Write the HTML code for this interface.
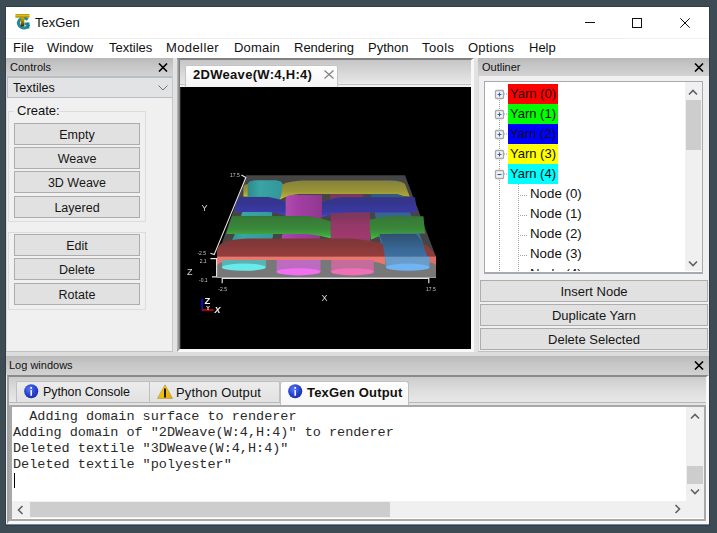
<!DOCTYPE html>
<html><head><meta charset="utf-8">
<style>
html,body{margin:0;padding:0;}
body{width:717px;height:533px;position:relative;overflow:hidden;background:#3d4b54;font-family:"Liberation Sans",sans-serif;font-size:13px;color:#111;}
.a{position:absolute;}
.t{position:absolute;white-space:nowrap;line-height:13px;}
.btn{position:absolute;box-sizing:border-box;background:#e1e1e1;border:1px solid #adadad;text-align:center;font-size:13px;line-height:21px;color:#161616;}
.dtitle{position:absolute;height:18px;background:linear-gradient(#b9b9b9,#c6c6c6 40%,#d2d2d2);}
.mono{font-family:"Liberation Mono",monospace;font-size:13.5px;line-height:16px;white-space:pre;color:#2a2a2a;}
</style></head>
<body>
<!-- window -->
<div class="a" style="left:5px;top:6px;width:705px;height:520px;background:#323e46;"></div>
<div class="a" style="left:6px;top:7px;width:703px;height:518px;background:#7584a0;"></div>
<div class="a" style="left:6px;top:7px;width:703px;height:517px;background:#f0f0f0;"></div>
<!-- title bar -->
<div class="a" style="left:6px;top:7px;width:703px;height:31px;background:#fff;"></div>
<div class="a" style="left:6px;top:38px;width:616px;height:1px;background:#ececec;"></div>
<div class="a" style="left:6px;top:39px;width:703px;height:19px;background:#fff;"></div>
<!-- app icon -->
<svg class="a" style="left:13px;top:12px" width="20" height="20" viewBox="0 0 20 20">
  <defs>
   <linearGradient id="tst" x1="0" y1="0" x2="0" y2="1"><stop offset="0" stop-color="#d8b000"/><stop offset="0.6" stop-color="#8a6a00"/><stop offset="1" stop-color="#2a2000"/></linearGradient>
   <linearGradient id="tbar" x1="0" y1="0" x2="0" y2="1"><stop offset="0" stop-color="#a08000"/><stop offset="0.4" stop-color="#e0c000"/><stop offset="1" stop-color="#9a7c00"/></linearGradient>
  </defs>
  <path d="M14.6 7.6A5.3 5 0 1 0 15.8 12.5" fill="none" stroke="#1e8c9c" stroke-width="3"/>
  <rect x="11.5" y="10.6" width="4.8" height="2.6" fill="#1e8c9c"/>
  <rect x="13.6" y="10.6" width="2.7" height="6" fill="#1a7f8e"/>
  <rect x="2.4" y="2.1" width="14.1" height="3.5" fill="url(#tbar)"/>
  <rect x="7.7" y="5.4" width="3.6" height="9" fill="url(#tst)"/>
</svg>
<div class="t" style="left:35px;top:16px;font-size:13px;">TexGen</div>
<!-- window controls -->
<div class="a" style="left:585px;top:22px;width:10px;height:1px;background:#111;"></div>
<div class="a" style="left:632px;top:18px;width:8px;height:8px;border:1px solid #111;"></div>
<svg class="a" style="left:680px;top:18px" width="10" height="10" viewBox="0 0 10 10"><path d="M0.3 0.3L9.7 9.7M9.7 0.3L0.3 9.7" stroke="#111" stroke-width="1"/></svg>
<!-- menu -->
<div class="t" style="left:13px;top:41px;">File</div>
<div class="t" style="left:47px;top:41px;">Window</div>
<div class="t" style="left:109px;top:41px;">Textiles</div>
<div class="t" style="left:166px;top:41px;letter-spacing:0.4px;">Modeller</div>
<div class="t" style="left:234px;top:41px;letter-spacing:0.2px;">Domain</div>
<div class="t" style="left:294px;top:41px;">Rendering</div>
<div class="t" style="left:368px;top:41px;">Python</div>
<div class="t" style="left:422px;top:41px;letter-spacing:0.4px;">Tools</div>
<div class="t" style="left:468px;top:41px;letter-spacing:0.2px;">Options</div>
<div class="t" style="left:529px;top:41px;">Help</div>

<!-- Controls dock -->
<div class="dtitle" style="left:6px;top:58px;width:167px;"></div>
<div class="t" style="left:10px;top:61px;font-size:11px;">Controls</div>
<svg class="a" style="left:158px;top:63px" width="10" height="9" viewBox="0 0 10 9"><path d="M1 0.5L9 8.5M9 0.5L1 8.5" stroke="#000" stroke-width="1.6"/></svg>
<div class="a" style="left:7px;top:76px;width:166px;height:22px;box-sizing:border-box;background:#e2e3e5;border:1px solid #b9bec4;border-width:2px 1px 1px 1px;"></div>
<div class="t" style="left:13px;top:82px;font-size:12.5px;">Textiles</div>
<svg class="a" style="left:158px;top:85px" width="10" height="6" viewBox="0 0 10 6"><path d="M0.5 0.5L5 5L9.5 0.5" stroke="#707070" fill="none" stroke-width="1"/></svg>

<!-- group box 1 -->
<div class="a" style="left:8px;top:111px;width:138px;height:111px;box-sizing:border-box;border:1px solid #dcdcdc;"></div>
<div class="a" style="left:14px;top:104px;width:45px;height:12px;background:#f0f0f0;"></div>
<div class="t" style="left:17px;top:104px;">Create:</div>
<div class="btn" style="left:14px;top:123px;width:126px;height:22px;font-size:12.5px;padding-top:1px;">Empty</div>
<div class="btn" style="left:14px;top:147px;width:126px;height:22px;font-size:12.5px;padding-top:1px;">Weave</div>
<div class="btn" style="left:14px;top:171px;width:126px;height:22px;font-size:12.5px;padding-top:1px;">3D Weave</div>
<div class="btn" style="left:14px;top:196px;width:126px;height:22px;font-size:12.5px;padding-top:1px;">Layered</div>
<!-- group box 2 -->
<div class="a" style="left:8px;top:232px;width:138px;height:78px;box-sizing:border-box;border:1px solid #dcdcdc;"></div>
<div class="btn" style="left:14px;top:234px;width:126px;height:22px;font-size:12.5px;padding-top:1px;">Edit</div>
<div class="btn" style="left:14px;top:258px;width:126px;height:22px;font-size:12.5px;padding-top:1px;">Delete</div>
<div class="btn" style="left:14px;top:283px;width:126px;height:22px;font-size:12.5px;padding-top:1px;">Rotate</div>
<!-- panel borders -->
<div class="a" style="left:6px;top:76px;width:1px;height:275px;background:#dadada;"></div>
<div class="a" style="left:172px;top:76px;width:1px;height:275px;background:#c8c8c8;"></div>
<div class="a" style="left:6px;top:351px;width:167px;height:1px;background:#c0c0c0;"></div>

<!-- separators -->
<div class="a" style="left:173px;top:58px;width:4px;height:294px;background:#e2e2e2;"></div>
<div class="a" style="left:474px;top:58px;width:4px;height:294px;background:#e2e2e2;"></div>

<!-- center tab widget -->
<div class="a" style="left:177px;top:58px;width:297px;height:294px;box-sizing:border-box;border-style:solid;border-color:#808080 #f8f8f8 #f8f8f8 #a4a4a4;border-width:2px 3px 3px 3px;background:linear-gradient(#c6c6c6,#e6e6e6 23px,#f0f0f0 24px);"></div>
<div class="a" style="left:180px;top:84px;width:291px;height:1px;background:#c0c0c0;"></div>
<div class="a" style="left:185px;top:65px;width:153px;height:22px;box-sizing:border-box;border:1px solid #c4c4c4;border-bottom:none;border-radius:2px 2px 0 0;background:linear-gradient(#ffffff,#f4f4f4);"></div>
<div class="t" style="left:193px;top:68px;font-weight:bold;font-size:13px;letter-spacing:0.3px;">2DWeave(W:4,H:4)</div>
<svg class="a" style="left:324px;top:70px" width="10" height="9" viewBox="0 0 10 9"><path d="M0.5 0.5L9.5 8.5M9.5 0.5L0.5 8.5" stroke="#808080" stroke-width="1.2"/></svg>
<!-- 3D viewport -->
<svg class="a" style="left:180px;top:87px" width="291" height="262" viewBox="180 87 291 262">
<defs>
 <linearGradient id="gy" x1="0" y1="0" x2="0" y2="1"><stop offset="0" stop-color="#85813a"/><stop offset="0.55" stop-color="#9a9438"/><stop offset="0.85" stop-color="#b4ac3a"/><stop offset="1" stop-color="#d4cc46"/></linearGradient>
 <linearGradient id="gb" x1="0" y1="0" x2="0" y2="1"><stop offset="0" stop-color="#343486"/><stop offset="0.7" stop-color="#3838a0"/><stop offset="0.88" stop-color="#3c3cbc"/><stop offset="1" stop-color="#5050ea"/></linearGradient>
 <linearGradient id="gg" x1="0" y1="0" x2="0" y2="1"><stop offset="0" stop-color="#367636"/><stop offset="0.6" stop-color="#3a8a3a"/><stop offset="0.85" stop-color="#3ea83e"/><stop offset="1" stop-color="#4cd04c"/></linearGradient>
 <linearGradient id="gr" x1="0" y1="0" x2="0" y2="1"><stop offset="0" stop-color="#7c3636"/><stop offset="0.5" stop-color="#883a3a"/><stop offset="1" stop-color="#983c3a"/></linearGradient>
 <linearGradient id="gc" x1="0" y1="0" x2="1" y2="0"><stop offset="0" stop-color="#2c8a8a"/><stop offset="0.35" stop-color="#3aa4a4"/><stop offset="1" stop-color="#33969a"/></linearGradient>
 <linearGradient id="gm" x1="0" y1="0" x2="1" y2="0"><stop offset="0" stop-color="#b04ab0"/><stop offset="0.4" stop-color="#a23ea2"/><stop offset="1" stop-color="#903890"/></linearGradient>
 <linearGradient id="gm2" x1="0" y1="0" x2="0" y2="1"><stop offset="0" stop-color="#7a3858"/><stop offset="0.5" stop-color="#96386a"/><stop offset="1" stop-color="#a03a6e"/></linearGradient>
 <linearGradient id="gs" x1="0" y1="0" x2="0" y2="1"><stop offset="0" stop-color="#2e5070"/><stop offset="0.5" stop-color="#3a6a98"/><stop offset="1" stop-color="#4478aa"/></linearGradient>
 <filter id="bl" x="-5%" y="-5%" width="110%" height="110%"><feGaussianBlur stdDeviation="0.35"/></filter>
</defs>
<rect x="180" y="87" width="291" height="262" fill="#000"/>
<g filter="url(#bl)">
<!-- top face -->
<path d="M246 175.2H405L436 256.8H217Z" fill="#454545"/>
<!-- warps full -->
<path d="M248 184Q249 180.6 256 180.6H276Q282.5 181 282.5 185L281 197L272 213L273 236L266 262H222L234 236L242 213L247 197Z" fill="url(#gc)"/>
<path d="M286 199Q287 195 292 195H322L321.5 217L320 236L320.5 262H277L282 236L286 217Z" fill="url(#gm)"/>
<path d="M330 193H362L369.7 213L370 238L374 262H331L331 238L331 213Z" fill="url(#gm2)"/>
<path d="M371 194L380 180H400L410 213L420 235L428 258L429.5 267H386L385 260L380 240L374.7 213Z" fill="url(#gs)"/>
<!-- yellow weft -->
<path d="M243.4 187Q244 184 249 184V196.8H243.4Z" fill="url(#gy)"/>
<path d="M282.2 184.5Q290 181 302.3 180.6H388.5Q402 181 405 184L409.7 196.5Q404 196.5 397.4 194H299Q288 195 280 199.6Z" fill="url(#gy)"/>
<!-- blue weft -->
<path d="M239.5 196.8H267.4Q277 198 285.8 202.4V215.6Q277 212 267 212H235Q234 204 239.5 196.8Z" fill="url(#gb)"/>
<path d="M321.9 202.4Q331 198 342.5 197.3H415L417 212.4H347Q333 213 322 216.9Z" fill="url(#gb)"/>
<!-- cyan over yellow -->
<path d="M248 184Q249 180.6 256 180.6H276Q282.5 181 282.5 185L281 196.8H247.5Z" fill="url(#gc)"/>
<!-- magenta over blue -->
<path d="M285.6 199Q286.5 195 292 195H322L321.5 217H285.6Z" fill="url(#gm)"/>
<!-- green weft -->
<path d="M232 216H307.5Q320 217.5 330.8 221.3V238.3Q320 235.5 307 234H226.3Z" fill="url(#gg)"/>
<path d="M368.7 220Q380 216.5 392 216.2H423.5L425 233.5H392Q380 235 371 239.5Z" fill="url(#gg)"/>
<!-- crimson over green -->
<path d="M330.8 213.2H369.7L370 238.3H331Z" fill="url(#gm2)"/>
<!-- red weft -->
<path d="M222.5 242.7Q232 239 247.7 238.6H351.5Q370 240 385 244.5V257H217V251Q218 245 222.5 242.7Z" fill="url(#gr)"/>
<path d="M423 244Q431 246 436 256.8V265Q430 262 427 259Z" fill="#8a3a3a"/>
<!-- steel blue over red -->
<path d="M379.5 234H416L421 240L428 258V267H386Q385 250 379.5 234Z" fill="url(#gs)"/>
<!-- front face -->
<path d="M217 256.8H436V278H217Z" fill="#787878"/>
<path d="M217 265Q222 260 240 260H360Q376 261 385 264.5V256.8H217Z" fill="#ea766e"/>
<path d="M428 256.8H436V265Q432 262 428.5 262Z" fill="#dc6e66"/>
<path d="M222 260H266V267H222Z" fill="#5ab2b2"/>
<path d="M276.6 260H320.5V272H276.6Z" fill="#bc6cc0"/>
<path d="M331.2 260H373.8V272H331.2Z" fill="#c46c9c"/>
<path d="M385 256.8H429.5V267H386Z" fill="#6a9cca"/>
<ellipse cx="243.8" cy="267.2" rx="22" ry="3.6" fill="#68eaea"/>
<ellipse cx="298.5" cy="271.8" rx="22" ry="3.6" fill="#f070f0"/>
<ellipse cx="352.5" cy="271.8" rx="21.5" ry="3.6" fill="#f070b8"/>
<ellipse cx="407.8" cy="267.2" rx="21.8" ry="3.6" fill="#70b4f4"/>
<path d="M217 277.5H436" stroke="#9a9a9a" stroke-width="1"/>
<!-- axes -->
<g stroke="#e4e4e4" stroke-width="1.15" fill="none">
 <path d="M241.5 175L245.8 177.6L214.2 254.6L210.4 253.3"/>
 <path d="M210.4 258.6H216.6V276.8H212"/>
 <path d="M222.2 283.3V278.3H428.8V283.3"/>
</g>
<g fill="#c8c8c8" font-family="Liberation Sans" font-size="5">
 <text x="230" y="177">17.5</text>
 <text x="197.4" y="255">-2.5</text>
 <text x="199.7" y="262.7">2.1</text>
 <text x="199" y="282">-0.1</text>
 <text x="218.3" y="291">-2.5</text>
 <text x="426" y="291">17.5</text>
</g>
<g fill="#d8d8d8" font-family="Liberation Sans" font-size="9">
 <text x="201.5" y="210.5">Y</text>
 <text x="187" y="274.8">Z</text>
 <text x="321.5" y="300.5">X</text>
</g>
<!-- orientation axes -->
<path d="M202.1 298.3V310.5" stroke="#0808b8" stroke-width="2"/>
<path d="M202 310H213.5" stroke="#b00000" stroke-width="2"/>
<g fill="#f0f0f0" font-family="Liberation Sans" font-weight="bold">
 <text x="204.5" y="304" font-size="9.5">Z</text>
 <text x="206" y="309.5" font-size="6">Y</text>
 <text x="214.5" y="312.8" font-size="9" font-style="italic">X</text>
</g>
</g>
</svg>
<!-- vp-edge -->
<div class="a" style="left:177px;top:60px;width:1px;height:289px;background:#b4b4b4;"></div>
<div class="a" style="left:178px;top:60px;width:1px;height:289px;background:#989898;"></div>
<div class="a" style="left:179px;top:60px;width:1px;height:289px;background:#7c7c7c;"></div>
<div class="a" style="left:180px;top:87px;width:1px;height:262px;background:#262626;"></div>
<!-- Outliner dock -->
<div class="dtitle" style="left:478px;top:58px;width:231px;"></div>
<div class="t" style="left:482px;top:61px;font-size:11px;">Outliner</div>
<svg class="a" style="left:694px;top:63px" width="10" height="9" viewBox="0 0 10 9"><path d="M1 0.5L9 8.5M9 0.5L1 8.5" stroke="#000" stroke-width="1.6"/></svg>
<div class="a" style="left:478px;top:76px;width:1px;height:275px;background:#dadada;"></div>
<div class="a" style="left:478px;top:351px;width:231px;height:1px;background:#c0c0c0;"></div>
<div class="a" style="left:484px;top:81px;width:219px;height:193px;box-sizing:border-box;border:1px solid #a4aab0;border-bottom:2px solid #a4aab0;background:#fff;overflow:hidden;"></div>
<!-- tree contents -->
<div class="a" style="left:485px;top:82px;width:200px;height:189px;overflow:hidden;">
<svg class="a" style="left:0;top:0" width="200" height="190" viewBox="0 0 200 190">
 <g stroke="#a0a0a0" stroke-width="1" stroke-dasharray="1 1" fill="none">
  <path d="M14.5 12V190"/>
  <path d="M19 12H23M19 32H23M19 52H23M19 72H23M19 92H23"/>
  <path d="M33.5 102V190"/>
  <path d="M35 113.5H42M35 133.5H42M35 153.5H42M35 173.5H42"/>
 </g>
 <g fill="#f4f4f4" stroke="#a8a8a8" stroke-width="1.3">
  <rect x="10.5" y="8.5" width="8" height="8" rx="1"/>
  <rect x="10.5" y="28.5" width="8" height="8" rx="1"/>
  <rect x="10.5" y="48.5" width="8" height="8" rx="1"/>
  <rect x="10.5" y="68.5" width="8" height="8" rx="1"/>
  <rect x="10.5" y="88.5" width="8" height="8" rx="1"/>
 </g>
 <g stroke="#3b5fa8" stroke-width="1.2">
  <path d="M12.5 12.5H16.5M14.5 10.5V14.5"/>
  <path d="M12.5 32.5H16.5M14.5 30.5V34.5"/>
  <path d="M12.5 52.5H16.5M14.5 50.5V54.5"/>
  <path d="M12.5 72.5H16.5M14.5 70.5V74.5"/>
  <path d="M12.5 92.5H16.5"/>
 </g>
</svg>
<div class="a" style="left:23px;top:2px;width:50px;height:20px;background:#ff0000;"></div>
<div class="a" style="left:23px;top:22px;width:50px;height:20px;background:#00ff00;"></div>
<div class="a" style="left:23px;top:42px;width:50px;height:20px;background:#0000ff;"></div>
<div class="a" style="left:23px;top:62px;width:50px;height:20px;background:#ffff00;"></div>
<div class="a" style="left:23px;top:82px;width:50px;height:20px;background:#00ffff;"></div>
<div class="t" style="left:25px;top:5px;">Yarn (0)</div>
<div class="t" style="left:25px;top:25px;">Yarn (1)</div>
<div class="t" style="left:25px;top:45px;">Yarn (2)</div>
<div class="t" style="left:25px;top:65px;">Yarn (3)</div>
<div class="t" style="left:25px;top:85px;">Yarn (4)</div>
<div class="t" style="left:45px;top:105px;font-size:13.3px;">Node (0)</div>
<div class="t" style="left:45px;top:125px;font-size:13.3px;">Node (1)</div>
<div class="t" style="left:45px;top:145px;font-size:13.3px;">Node (2)</div>
<div class="t" style="left:45px;top:165px;font-size:13.3px;">Node (3)</div>
<div class="t" style="left:45px;top:185px;font-size:13.3px;">Node (4)</div>
</div>
<!-- tree scrollbar -->
<div class="a" style="left:685px;top:82px;width:17px;height:189px;background:#f0f0f0;"></div>
<div class="a" style="left:686px;top:100px;width:15px;height:50px;background:#cdcdcd;"></div>
<svg class="a" style="left:688px;top:89px" width="10" height="7" viewBox="0 0 10 7"><path d="M1 5.5L5 1.5L9 5.5" stroke="#606060" stroke-width="1.6" fill="none"/></svg>
<svg class="a" style="left:688px;top:260px" width="10" height="7" viewBox="0 0 10 7"><path d="M1 1.5L5 5.5L9 1.5" stroke="#606060" stroke-width="1.6" fill="none"/></svg>
<div class="btn" style="left:480px;top:280px;width:228px;height:22px;">Insert Node</div>
<div class="btn" style="left:480px;top:304px;width:228px;height:22px;">Duplicate Yarn</div>
<div class="btn" style="left:480px;top:328px;width:228px;height:22px;">Delete Selected</div>
<!-- Log windows -->
<div class="a" style="left:6px;top:352px;width:703px;height:4px;background:#dcdcdc;"></div>
<div class="dtitle" style="left:6px;top:356px;width:703px;height:19px;"></div>
<div class="t" style="left:9px;top:359px;font-size:11px;">Log windows</div>
<svg class="a" style="left:694px;top:361px" width="10" height="9" viewBox="0 0 10 9"><path d="M1 0.5L9 8.5M9 0.5L1 8.5" stroke="#000" stroke-width="1.6"/></svg>
<div class="a" style="left:6px;top:375px;width:703px;height:149px;background:#f0f0f0;"></div>
<div class="a" style="left:7px;top:375px;width:702px;height:149px;box-sizing:border-box;border-style:solid;border-color:#8a8a8a #f8f8f8 #f8f8f8 #a0a0a0;border-width:2px 3px 3px 2px;background:linear-gradient(#cccccc,#dedede 14px,#e8e8e8 26px);"></div>
<div class="a" style="left:9px;top:402px;width:697px;height:1px;background:#b8b8b8;"></div>
<div class="a" style="left:9px;top:403px;width:697px;height:2px;background:#e4e4e4;"></div>
<!-- text edit frame -->
<div class="a" style="left:9px;top:405px;width:697px;height:116px;box-sizing:border-box;border-style:solid;border-color:#a8a8a8;border-width:2px 2px 2px 3px;background:#fff;"></div>
<!-- log tabs -->
<div class="a" style="left:16px;top:381px;width:134px;height:21px;box-sizing:border-box;border:1px solid #c0c0c0;border-bottom:none;border-radius:2px 2px 0 0;background:linear-gradient(#ececec,#e2e2e2);"></div>
<div class="a" style="left:149px;top:381px;width:131px;height:21px;box-sizing:border-box;border:1px solid #c0c0c0;border-bottom:none;border-radius:2px 2px 0 0;background:linear-gradient(#ececec,#e2e2e2);"></div>
<div class="a" style="left:280px;top:381px;width:129px;height:24px;box-sizing:border-box;border:1px solid #c0c0c0;border-bottom:none;border-radius:3px 3px 0 0;background:linear-gradient(#ffffff,#f6f6f6);"></div>
<svg class="a" style="left:24px;top:384px" width="15" height="15" viewBox="0 0 15 15"><defs><radialGradient id="ib" cx="0.4" cy="0.35" r="0.75"><stop offset="0" stop-color="#5a78f0"/><stop offset="0.6" stop-color="#2440d0"/><stop offset="1" stop-color="#1a2a90"/></radialGradient></defs><circle cx="7.2" cy="7.2" r="7" fill="url(#ib)"/><rect x="6.4" y="3" width="1.6" height="1.8" fill="#fff"/><rect x="6.4" y="6" width="1.6" height="5.8" fill="#f0f0ff"/></svg>
<div class="t" style="left:43px;top:386px;font-size:12.5px;letter-spacing:-0.1px;">Python Console</div>
<svg class="a" style="left:157px;top:384px" width="16" height="15" viewBox="0 0 16 15"><defs><linearGradient id="wg" x1="0" y1="0" x2="1" y2="1"><stop offset="0" stop-color="#f4e000"/><stop offset="1" stop-color="#f0a000"/></linearGradient></defs><path d="M8 0.8L15.5 14.4H0.5Z" fill="url(#wg)" stroke="#a09060" stroke-width="0.6"/><rect x="7" y="4.5" width="2" height="9" fill="#1a1a1a"/></svg>
<div class="t" style="left:176px;top:386px;letter-spacing:0.15px;">Python Output</div>
<svg class="a" style="left:288px;top:384px" width="15" height="15" viewBox="0 0 15 15"><circle cx="7.2" cy="7.2" r="7" fill="url(#ib)"/><rect x="6.4" y="3" width="1.6" height="1.8" fill="#fff"/><rect x="6.4" y="6" width="1.6" height="5.8" fill="#f0f0ff"/></svg>
<div class="t" style="left:307px;top:386px;font-weight:bold;font-size:13px;letter-spacing:0.2px;">TexGen Output</div>
<!-- log text -->
<div class="a mono" style="left:13px;top:409px;">  Adding domain surface to renderer
Adding domain of "2DWeave(W:4,H:4)" to renderer
Deleted textile "3DWeave(W:4,H:4)"
Deleted textile "polyester"</div>
<div class="a" style="left:14px;top:473px;width:1px;height:15px;background:#000;"></div>
<!-- log v scrollbar -->
<div class="a" style="left:686px;top:407px;width:18px;height:111px;background:#f0f0f0;"></div>
<div class="a" style="left:687px;top:466px;width:16px;height:18px;background:#cdcdcd;"></div>
<svg class="a" style="left:690px;top:413px" width="10" height="7" viewBox="0 0 10 7"><path d="M1 5.5L5 1.5L9 5.5" stroke="#606060" stroke-width="1.6" fill="none"/></svg>
<svg class="a" style="left:690px;top:488px" width="10" height="7" viewBox="0 0 10 7"><path d="M1 1.5L5 5.5L9 1.5" stroke="#606060" stroke-width="1.6" fill="none"/></svg>
<!-- log h scrollbar -->
<div class="a" style="left:12px;top:501px;width:674px;height:17px;background:#f0f0f0;"></div>
<div class="a" style="left:30px;top:502px;width:360px;height:15px;background:#cdcdcd;"></div>
<svg class="a" style="left:17px;top:505px" width="7" height="10" viewBox="0 0 7 10"><path d="M5.5 1L1.5 5L5.5 9" stroke="#606060" stroke-width="1.6" fill="none"/></svg>
<svg class="a" style="left:674px;top:504px" width="7" height="10" viewBox="0 0 7 10"><path d="M1.5 1L5.5 5L1.5 9" stroke="#606060" stroke-width="1.6" fill="none"/></svg>
</body></html>
